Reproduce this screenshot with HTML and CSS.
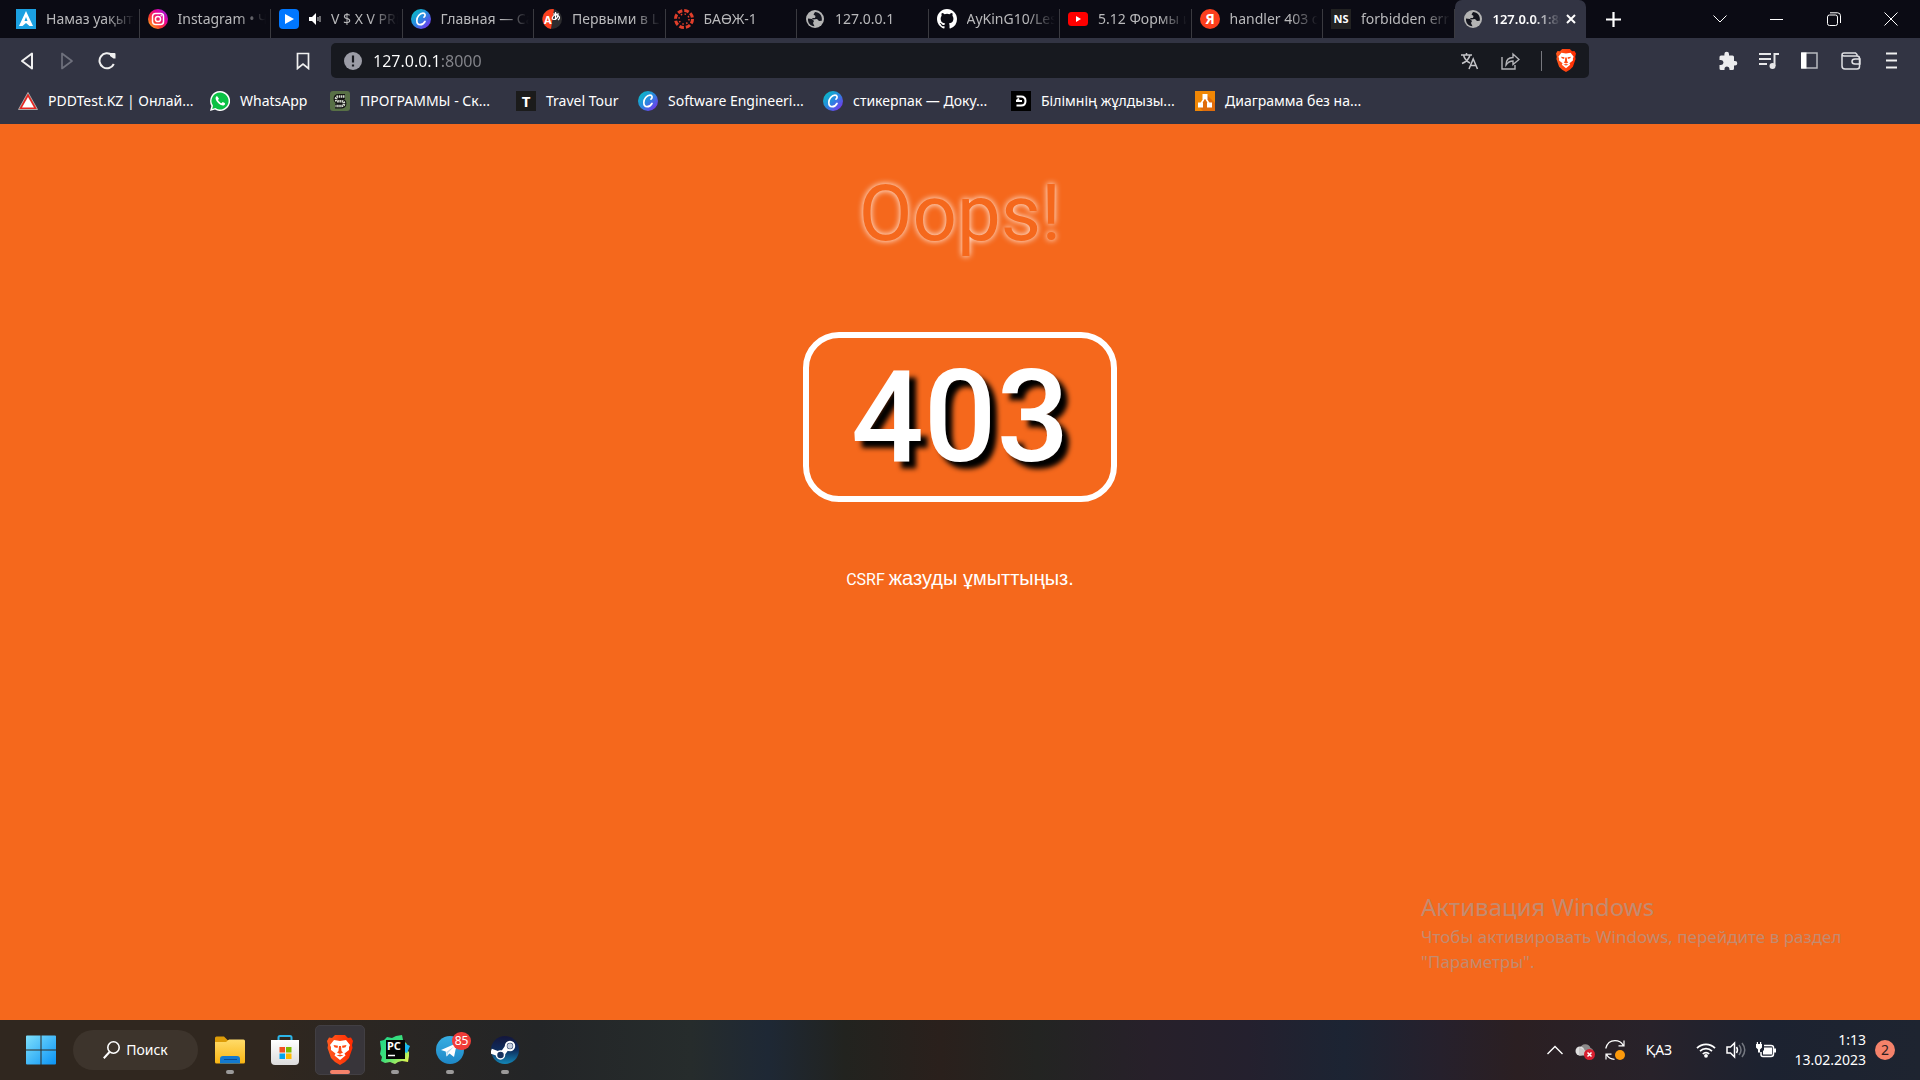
FILE: index.html
```html
<!DOCTYPE html>
<html lang="kk">
<head>
<meta charset="utf-8">
<meta name="viewport" content="width=device-width, initial-scale=1">
<title>127.0.0.1:8000</title>
<link rel="stylesheet" href="styles.css">
</head>
<body>
<svg class="defs" aria-hidden="true">
  <defs>
    <linearGradient id="g-insta" x1="0" y1="1" x2="1" y2="0"><stop offset="0" stop-color="#ffd521"/><stop offset=".35" stop-color="#fb3a30"/><stop offset=".65" stop-color="#e6009a"/><stop offset="1" stop-color="#7a2df5"/></linearGradient>
    <linearGradient id="g-canva" x1="0" y1="0" x2="1" y2="1"><stop offset="0" stop-color="#00c8c0"/><stop offset=".5" stop-color="#2a86e0"/><stop offset="1" stop-color="#8a1ff0"/></linearGradient>
    <linearGradient id="g-win" x1="0" y1="0" x2="1" y2="1"><stop offset="0" stop-color="#7fe0fb"/><stop offset="1" stop-color="#0a93f5"/></linearGradient>
    <linearGradient id="g-folder" x1="0" y1="0" x2="0" y2="1"><stop offset="0" stop-color="#ffdb69"/><stop offset="1" stop-color="#f9b513"/></linearGradient>
    <linearGradient id="g-store" x1="0" y1="0" x2="0" y2="1"><stop offset="0" stop-color="#ffffff"/><stop offset="1" stop-color="#dcdcdc"/></linearGradient>
    <linearGradient id="g-brave" x1="0" y1="0" x2="1" y2="0"><stop offset="0" stop-color="#ff5a1f"/><stop offset="1" stop-color="#ff2a00"/></linearGradient>
    <linearGradient id="g-pc" x1="0" y1="0" x2="1" y2="1"><stop offset="0" stop-color="#21d789"/><stop offset=".5" stop-color="#3fe07a"/><stop offset="1" stop-color="#fcf84a"/></linearGradient>
    <linearGradient id="g-tg" x1="0" y1="0" x2="0" y2="1"><stop offset="0" stop-color="#37aee2"/><stop offset="1" stop-color="#1e88c7"/></linearGradient>
    <linearGradient id="g-steam" x1="0" y1="0" x2="0" y2="1"><stop offset="0" stop-color="#14163c"/><stop offset=".5" stop-color="#0e2c5c"/><stop offset="1" stop-color="#1387b8"/></linearGradient>
    <symbol id="canva" viewBox="0 0 20 20"><circle cx="10" cy="10" r="10" fill="url(#g-canva)"/><path d="M13 8.200c1.800-1.500 1.400-4-1-4C8.800 4.200 5.800 8 5.800 11.500c0 2.500 1.300 4.200 3.400 4.200 2 0 3.700-1.300 4.800-3.200" fill="none" stroke="#fff" stroke-width="1.700" stroke-linecap="round"/></symbol>
    <symbol id="globe" viewBox="0 0 20 20"><circle cx="10" cy="10" r="9" fill="currentColor"/><path d="M3 9.500l4 .5 2 2-1 2 1.500 3.200C5 17 2.600 13.500 3 9.500zM10 3l-1.500 2.500 2 1.500-.5 2H7l1 1.500 4-.5 2 2 2.800-.3C17.500 6.500 14.500 3 10 3z" fill="#15161f"/></symbol>
    <symbol id="brave" viewBox="0 0 26 30"><path d="M8 0h10l3 3 3-.5L26 6l-1 4 .5 3L22 23l-4 4-5 3-5-3-4-4L.5 13 1 10 0 6l2-3.500L5 3z" fill="url(#g-brave)"/><path d="M7 5l6 1 6-1 4 5-1 2 0 3-4.500 3.500 1 2L13 25l-5.500-4.500 1-2L4 15v-3l-1-2z" fill="#fff"/><path d="M6.500 10l4.500.8-.5 2.200-3-.8zM19.500 10l-4.500.8.5 2.200 3-.8zM12 11h2l.5 5 1.500 1.500-3 1.500-3-1.500 1.500-1.500zM9.500 20.500l3.500-1 3.500 1-3.500 1z" fill="#ff4a14"/></symbol>
  </defs>
</svg>

<header class="browser">
  <div class="strip">
    <nav class="tabs" aria-label="Tabs">
      <div class="tab"><a href="#"><svg class="fav" viewBox="0 0 20 20"><path fill="#1ba0e1" d="M0 0h20v20H0z"/><path d="M10 2l7 15h-3.500L10 14l-3.500 3H3zM10 8l-1.500 4h3z" fill="#fff" fill-rule="evenodd"/></svg><span class="title">Намаз уақыты</span></a></div>
      <div class="tab"><a href="#"><svg class="fav" viewBox="0 0 20 20"><circle cx="10" cy="10" r="10" fill="url(#g-insta)"/><rect x="4.500" y="4.500" width="11" height="11" rx="3" fill="none" stroke="#fff" stroke-width="1.500"/><circle cx="10" cy="10" r="2.600" fill="none" stroke="#fff" stroke-width="1.500"/><circle cx="13.200" cy="6.800" r=".8" fill="#fff"/></svg><span class="title">Instagram • Чат</span></a></div>
      <div class="tab"><a href="#"><svg class="fav" viewBox="0 0 20 20"><rect width="20" height="20" rx="4" fill="#07f"/><path d="M6 5l9 5-9 5z" fill="#fff"/></svg><svg class="sound" viewBox="0 0 12 12"><path d="M0 4h3l4-4v12L3 8H0z" fill="#fff"/><path d="M9 4v4M11 3v6" stroke="#ccc"/></svg><span class="title">V $ X V PRiN</span></a></div>
      <div class="tab"><a href="#"><svg class="fav"><use href="#canva"/></svg><span class="title">Главная — Canva</span></a></div>
      <div class="tab"><a href="#"><svg class="fav" viewBox="0 0 20 20"><circle cx="10" cy="10" r="10" fill="#2c2c2e"/><path d="M12 .2A10 10 0 1 0 9 20z" fill="#fc3f1d"/><text x="2" y="15" class="glyph" font-size="11">A</text><path d="M11 5h6M13.500 3v7.500M16 6.500q-1 4-4 4t-1-3 5-1 0 4.500" fill="none" stroke="#fff" stroke-width="1.200"/></svg><span class="title">Первыми в Lin</span></a></div>
      <div class="tab"><a href="#"><svg class="fav" viewBox="0 0 20 20"><circle cx="10" cy="10" r="8.500" fill="none" stroke="#e13f2b" stroke-width="3" stroke-dasharray="4.700 1.976"/><circle cx="10" cy="10" r="5" fill="none" stroke="#e13f2b" stroke-width="1.500" stroke-dasharray="1.500 2.427"/></svg><span class="title">БАӨЖ-1</span></a></div>
      <div class="tab"><a href="#"><svg class="fav globe"><use href="#globe"/></svg><span class="title">127.0.0.1</span></a></div>
      <div class="tab"><a href="#"><svg class="fav" viewBox="0 0 16 16"><path fill="#fff" d="M8 0C3.580 0 0 3.580 0 8c0 3.540 2.290 6.530 5.470 7.590.4.070.55-.17.55-.38v-1.490c-2.010.37-2.530-.49-2.690-.94-.09-.23-.48-.94-.82-1.130-.28-.15-.68-.52-.01-.53.63-.01 1.080.58 1.230.82.72 1.210 1.870.87 2.330.66.070-.52.28-.87.51-1.070-1.780-.2-3.640-.89-3.640-3.950 0-.87.31-1.590.82-2.150-.08-.2-.36-1.020.08-2.120 0 0 .67-.21 2.200.82a7.400 7.400 0 0 1 4 0c1.530-1.040 2.200-.82 2.200-.82.44 1.100.16 1.920.08 2.120.51.56.82 1.270.82 2.150 0 3.070-1.870 3.750-3.650 3.950.29.25.54.73.54 1.480v2.200c0 .21.15.46.55.38A8.010 8.010 0 0 0 16 8c0-4.420-3.580-8-8-8z"/></svg><span class="title">AyKinG10/Lesson</span></a></div>
      <div class="tab"><a href="#"><svg class="fav" viewBox="0 0 20 20"><rect y="3" width="20" height="14" rx="3.500" fill="red"/><path d="M8 7l5 3-5 3z" fill="#fff"/></svg><span class="title">5.12 Формы и</span></a></div>
      <div class="tab"><a href="#"><svg class="fav" viewBox="0 0 20 20"><circle cx="10" cy="10" r="10" fill="#fc3f1d"/><text x="10" y="15" class="glyph" text-anchor="middle" font-size="14">Я</text></svg><span class="title">handler 403 dja</span></a></div>
      <div class="tab"><a href="#"><svg class="fav" viewBox="0 0 20 20"><path fill="#222" d="M0 0h20v20H0z"/><text x="10" y="14" class="glyph" text-anchor="middle" font-size="11">NS</text></svg><span class="title">forbidden error</span></a></div>
      <div class="tab active"><a href="#"><svg class="fav globe"><use href="#globe"/></svg><span class="title">127.0.0.1:8000</span></a><button class="close" aria-label="Close tab"><svg width="10" height="10" viewBox="0 0 10 10"><path d="M1 1l8 8M9 1L1 9" stroke="#fff" stroke-width="2"/></svg></button></div>
    </nav>
    <button class="newtab" aria-label="New tab"><svg width="15" height="15" viewBox="0 0 15 15"><path d="M7.500 0v15M0 7.500h15" stroke="#fff" stroke-width="2.200"/></svg></button>
    <div class="controls">
      <button aria-label="Search tabs"><svg width="14" height="8" viewBox="0 0 14 8"><path d="M.5 .5L7 7l6.500-6.500"/></svg></button>
      <button aria-label="Minimize"><svg width="13" height="13" viewBox="0 0 13 13"><path d="M0 6.500h13"/></svg></button>
      <button aria-label="Restore"><svg width="14" height="14" viewBox="0 0 14 14"><rect x=".5" y="3" width="10" height="10.500" rx="2"/><path d="M3 .8h7.500q3 0 3 3V11"/></svg></button>
      <button aria-label="Close"><svg width="14" height="14" viewBox="0 0 14 14"><path d="M.5 .5l13 13M13.500 .5l-13 13"/></svg></button>
    </div>
  </div>

  <div class="toolbar">
    <button aria-label="Back"><svg width="14" height="18" viewBox="0 0 14 18"><path d="M12 1.500v15L2 9z" stroke="#f0f0f0" stroke-width="2" stroke-linejoin="round"/></svg></button>
    <button aria-label="Forward"><svg width="14" height="18" viewBox="0 0 14 18"><path d="M2 1.500v15L12 9z" stroke="#6f717d" stroke-width="1.700" stroke-linejoin="round"/></svg></button>
    <button aria-label="Reload"><svg width="18" height="18" viewBox="0 0 18 18"><path d="M14 3.200A7.500 7.500 0 1 0 15.800 12" stroke="#f0f0f0" stroke-width="2"/><path d="M12 1h4.500q1 0 1 1v4.500h-2L12 4z" fill="#f0f0f0"/></svg></button>
    <button class="mark" aria-label="Bookmark"><svg width="14" height="18" viewBox="0 0 14 18"><path d="M1.500 1.500h11v15L7 12l-5.500 4.500z" stroke="#f0f0f0" stroke-width="1.700"/></svg></button>
    <div class="address">
      <svg width="18" height="18" viewBox="0 0 18 18"><circle cx="9" cy="9" r="9" fill="#9b9ca6"/><path d="M9 3.500v7M9 12.500v2" stroke="#17191f" stroke-width="2.200"/></svg>
      <input class="url" type="text" value="127.0.0.1:8000" aria-label="Address" spellcheck="false">
      <button aria-label="Translate"><svg width="18" height="18" viewBox="0 0 18 18"><path d="M0 3h11M5.500 1v2M9 3C8 7 5 10 1 11.500M2.500 3C3.500 7 6 9.500 9 11M8 17l4.200-10 4.300 10M9.500 13.500h6" stroke="#c4c4c8" stroke-width="1.500"/></svg></button>
      <button aria-label="Share"><svg width="19" height="18" viewBox="0 0 19 18"><path d="M1 5v12h13v-4M5 13c0-5 3-7.500 7-7.500V2l6 5.500-6 5v-3.500c-3 0-5 1-7 4z" stroke="#b4b4b8" stroke-width="1.400"/></svg></button>
      <span class="rule"></span>
      <button class="shield" aria-label="Brave Shields"><svg width="20" height="23"><use href="#brave"/></svg></button>
    </div>
    <button aria-label="Extensions"><svg width="20" height="20" viewBox="0 0 20 20"><path d="M17 10h-1V6q0-1.500-1.500-1.500H11V3a2.300 2.300 0 0 0-4.600 0v1.500H3Q1.500 4.500 1.500 6v3H3a2.500 2.500 0 0 1 0 5H1.500v3.500Q1.500 19 3 19h3.500v-1a2.500 2.500 0 0 1 5 0v1h3q1.500 0 1.500-1.500V14.600h1a2.300 2.300 0 0 0 0-4.600z" fill="#ececee"/></svg></button>
    <button aria-label="Media"><svg width="20" height="18" viewBox="0 0 20 18"><path d="M0 2h12M0 7h12M0 12h8M15.500 14V2H20" stroke="#e6e6e8" stroke-width="2"/><circle cx="13.500" cy="14" r="3" fill="#e6e6e8"/></svg></button>
    <button aria-label="Side panel"><svg width="17" height="17" viewBox="0 0 17 17"><rect x="1" y="1" width="15" height="15" stroke="#b9bac0" stroke-width="1.500"/><path d="M0 .5h5.500v16H0z" fill="#fff"/></svg></button>
    <button aria-label="Wallet"><svg width="20" height="18" viewBox="0 0 20 18"><path d="M16 4V2.500L14.500 1H3Q1 1 1 3v11q0 3 3 3h12q2.500 0 2.500-2.500V6.500Q18.500 4 16 4H3Q1 4 1 2.500M19 7h-5q-3 0-3 2.500t3 2.500h5z" stroke="#e0e0e4" stroke-width="1.500"/></svg></button>
    <button aria-label="Menu"><svg width="11" height="17" viewBox="0 0 11 17"><path d="M0 1.500h11M0 8.500h11M0 15.500h11" stroke="#f0f0f0" stroke-width="1.800"/></svg></button>
  </div>

  <nav class="bookmarks" aria-label="Bookmarks">
    <a href="#"><svg class="fav" viewBox="0 0 20 20"><path d="M10 1.500L19.500 18.500H.5z" fill="#e52620" stroke="#aaa"/><path d="M10 6l6 10.500H4z" fill="#fff"/></svg>PDDTest.KZ | Онлай...</a>
    <a href="#"><svg class="fav" viewBox="0 0 20 20"><path d="M10 0a10 10 0 1 1-5 18.600L0 20l1.400-5A10 10 0 0 1 10 0z" fill="#fff"/><path d="M10 1.500a8.500 8.500 0 1 1-4.600 15.600L2.200 18l.8-3.200A8.500 8.500 0 0 1 10 1.500z" fill="#0bc144"/><path d="M7 5c-2 1-1.800 3.500.5 6.200S12.700 15 14 14.300s1.200-2 .7-2.300l-2-1-1.200 1.200C10 11.700 8.600 10.200 8 9l1-1.200z" fill="#fff"/></svg>WhatsApp</a>
    <a href="#"><svg class="fav" viewBox="0 0 20 20"><rect width="20" height="20" rx="3" fill="#587046"/><path d="M15 5.500H8.500Q6 5.500 6 8t2.500 2.200h3Q14 10.200 14 12.500T11.500 15H5" fill="none" stroke="#111" stroke-width="4.800"/><path d="M14.500 5.500h-6Q6 5.500 6 8t2.500 2.200h3Q14 10.200 14 12.500T11.500 15h-6" fill="none" stroke="#d8ddd2" stroke-width="2.600" stroke-dasharray="1.500 .6"/></svg>ПРОГРАММЫ - Ск...</a>
    <a href="#"><svg class="fav" viewBox="0 0 20 20"><path fill="#1b1b1b" d="M0 0h20v20H0z"/><text x="10" y="15.500" class="glyph" text-anchor="middle" font-size="15">T</text></svg>Travel Tour</a>
    <a href="#"><svg class="fav"><use href="#canva"/></svg>Software Engineeri...</a>
    <a href="#"><svg class="fav"><use href="#canva"/></svg>стикерпак — Доку...</a>
    <a href="#"><svg class="fav" viewBox="0 0 20 20"><path d="M0 0h20v20H0z"/><path d="M5.500 5.500H10q4.500 0 4.500 4.500T10 14.500H5.500M5 10h6M8 7.500L5.500 10" fill="none" stroke="#fff" stroke-width="2"/></svg>Білімнің жұлдызы...</a>
    <a href="#"><svg class="fav" viewBox="0 0 20 20"><path fill="#f08705" d="M0 0h20v20H0z"/><path d="M12 4l8 8v8H8l-4-4z" fill="#df6c0c"/><path d="M10 6L5.500 13.500M10 6l4.500 7.500" stroke="#fff" stroke-width="1.600"/><path d="M7.500 3h5v5h-5zM3 11.500h5v5H3zM12 11.500h5v5h-5z" fill="#fff"/></svg>Диаграмма без на...</a>
  </nav>
</header>

<main class="page">
  <h1>Oops!</h1>
  <p class="code">403</p>
  <p class="note">CSRF <span>жазуды ұмыттыңыз.</span></p>
  <aside class="activation">
    <h2>Активация Windows</h2>
    <p>Чтобы активировать Windows, перейдите в раздел "Параметры".</p>
  </aside>
</main>

<footer class="taskbar">
  <button class="app start" aria-label="Start"><svg width="30" height="30" viewBox="0 0 30 30"><path d="M0 1.500Q0 .5 1 .5h13.500v14H0zM15.500 .5H29q1 0 1 1v13H15.500zM0 15.500h14.500v14H1q-1 0-1-1zM15.500 15.500H30v13q0 1-1 1H15.500z" fill="url(#g-win)"/></svg></button>
  <button class="search"><svg width="17" height="18" viewBox="0 0 17 18"><circle cx="10.500" cy="6.500" r="5.700" fill="none" stroke="#fff" stroke-width="1.600"/><path d="M6.500 11L.8 17.200" stroke="#fff" stroke-width="2"/></svg>Поиск</button>
  <button class="app running" aria-label="Explorer"><svg width="30" height="28" viewBox="0 0 30 28"><path d="M0 2q0-1.500 1.500-1.500H9l3.500 3.500H29V10H0z" fill="#dd9c08"/><path d="M0 6h11l3-2.500h14.500Q30 3.500 30 5v21q0 1.500-1.500 1.500h-27Q0 27.500 0 26z" fill="url(#g-folder)"/><path d="M5 27.500V23q0-3 3-3h14q3 0 3 3v4.500z" fill="#1379cf"/><path d="M9 23.500h13" stroke="#0a4d94"/></svg></button>
  <button class="app" aria-label="Store"><svg width="30" height="30" viewBox="0 0 30 30"><path d="M8.500 6V2.500q0-1.500 1.500-1.500h10q1.500 0 1.500 1.500V6" fill="none" stroke="#2cb5e8" stroke-width="2"/><path d="M1 5h28v21q0 4-4 4H5q-4 0-4-4z" fill="url(#g-store)"/><path d="M9.500 12H15v5.500H9.500z" fill="#f25022"/><path d="M16 12h5.500v5.500H16z" fill="#7fba00"/><path d="M9.500 18.500H15V24H9.500z" fill="#00a4ef"/><path d="M16 18.500h5.500V24H16z" fill="#ffb900"/></svg></button>
  <button class="app running current" aria-label="Brave"><svg width="26" height="30"><use href="#brave"/></svg></button>
  <button class="app running" aria-label="PyCharm"><svg width="30" height="30" viewBox="0 0 30 30"><path d="M0 6l4-1 3-3 5 1 4-2 6-1 1 5 4 4-1 5 3 3 0 4-1 6-6-1-4 1-3 2-5-2-5 1-4-2 1-4-2-3 1-5z" fill="url(#g-pc)"/><path d="M24 8l6 3-3 7-3-1z" fill="#19b7f0"/><path d="M6 5h19v19H6z" fill="#050505"/><text x="7" y="15" class="glyph" font-size="11">PC</text><path d="M8 20.500h7" stroke="#fff" stroke-width="1.500"/></svg></button>
  <button class="app running" aria-label="Telegram"><svg width="28" height="28" viewBox="0 0 28 28"><circle cx="14" cy="14" r="14" fill="url(#g-tg)"/><path d="M5 14l16-7-3 14-4.500-3.500-3 3-.8-5z" fill="#fff"/><path d="M10.200 16L18 10.500 12 17l-1 3.500z" fill="#b6d9ee"/></svg><span class="count">85</span></button>
  <button class="app running" aria-label="Steam"><svg width="28" height="28" viewBox="0 0 28 28"><circle cx="14" cy="14" r="14" fill="url(#g-steam)"/><path d="M0 15l8 3M11 18.500l5-7" stroke="#fff" stroke-width="5"/><circle cx="19" cy="10" r="4.200" fill="#17315c" stroke="#fff" stroke-width="2"/><circle cx="19" cy="10" r="2.700" fill="#c6cede"/><circle cx="9.500" cy="19" r="4" fill="#17315c" stroke="#fff" stroke-width="1.500"/></svg></button>

  <div class="tray">
    <button aria-label="Hidden icons"><svg width="16" height="10" viewBox="0 0 16 10"><path d="M.5 9L8 1.500 15.500 9" fill="none" stroke="#fff" stroke-width="1.400"/></svg></button>
    <button aria-label="OneDrive"><svg width="20" height="20" viewBox="0 0 20 20"><path d="M5 8.500A5.500 5.500 0 0 1 15.500 8 4 4 0 0 1 18 13H4z" fill="#8d8a8a"/><circle cx="5" cy="11" r="4.500" fill="#e0dfdf"/><path d="M4 7l9 5v3.500H4z" fill="#c9c7c7"/><circle cx="14.500" cy="14.500" r="5.500" fill="#d81f30"/><path d="M12.500 12.500l4 4M16.500 12.500l-4 4" stroke="#fff" stroke-width="1.500"/></svg></button>
    <button aria-label="Update"><svg width="20" height="20" viewBox="0 0 20 20"><path d="M.7 8.500C2 3.500 5.500 .7 10 .7c3.500 0 6.500 1.600 8.300 4.800M19 .5v5.300h-5.500M9.500 19.300c-3.500 0-6.500-1.800-8-5M1 19.500v-5.300h5.500" fill="none" stroke="#fff" stroke-width="1.200"/><circle cx="15" cy="15" r="5" fill="#fc9a0c"/></svg></button>
    <button class="lang">ҚАЗ</button>
    <button class="status" aria-label="Network, volume, battery">
      <svg width="20" height="16" viewBox="0 0 20 16"><path d="M1 6.200a12.500 12.500 0 0 1 18 0M4 9.200a8.500 8.500 0 0 1 12 0M6.800 12a4.500 4.500 0 0 1 6.400 0" fill="none" stroke="#fff" stroke-width="1.700"/><circle cx="10" cy="13.800" r="1.900" fill="#fff"/></svg>
      <svg width="20" height="18" viewBox="0 0 20 18"><path d="M1 6h3.500L8.500 2v14l-4-4H1zM10.500 6q2 3 0 6" fill="none" stroke="#fff" stroke-width="1.500"/><path d="M13 4q4 5 0 10M16 2q5.500 7 0 14" fill="none" stroke="#747880" stroke-width="1.500"/></svg>
      <svg width="20" height="18" viewBox="0 0 20 18"><path d="M8 4.500h7q2.500 0 2.500 2V13q0 2.500-2.500 2.500H7q-2 0-2-2V11" fill="none" stroke="#fff" stroke-width="1.500"/><path d="M8 6.500h8v7H7V10l1-1zM18 7.500h2v4h-2zM0 3h6v3.500L4 8.500v3H2v-3L0 6.500zM.8 1h1.200v2H.8zM4 1h1.200v2H4z" fill="#fff"/></svg>
    </button>
    <div class="clock"><time>1:13</time><time>13.02.2023</time></div>
    <span class="alerts">2</span>
  </div>
</footer>
</body>
</html>
```
FILE: styles.css
```css
* { box-sizing: border-box; }

body {
  margin: 0;
  min-height: 100vh;
  display: flex;
  flex-direction: column;
  background: #f5681c;
  color: #fff;
  font: 14px/20px "Noto Sans", "Open Sans", sans-serif;
}

h1, h2, p { margin: 0; }
a { color: inherit; text-decoration: none; }
svg { display: block; flex: none; }

button {
  padding: 0;
  border: 0;
  background: none;
  color: inherit;
  font: inherit;
  display: flex;
  align-items: center;
  justify-content: center;
}

.defs { position: absolute; width: 0; height: 0; }
.glyph { fill: #fff; font-family: "Noto Sans", sans-serif; font-weight: 700; }
.fav { width: 20px; height: 20px; }

/* Tab strip */
.strip {
  height: 38px;
  display: flex;
  padding-left: 8px;
  background: #0b0b14;
}
.tabs { flex: 0 1 1578px; min-width: 0; display: flex; }
.tab {
  flex: 1 1 0;
  min-width: 0;
  display: flex;
  align-items: center;
  padding: 0 5px 0 8px;
  color: #b9b9bb;
  background: linear-gradient(#3a3a40, #3a3a40) right bottom / 1px 29px no-repeat;
}
.tab a { flex: 1; min-width: 0; display: flex; align-items: center; gap: 10px; }
.title {
  flex: 1;
  overflow: hidden;
  white-space: nowrap;
  mask-image: linear-gradient(to right, #000 calc(100% - 28px), transparent);
}
.sound { width: 12px; height: 12px; }
.globe { color: #b4b4b4; }
.tab.active { border-radius: 7px 7px 0 0; background: #323443; color: #fff; font-weight: 600; }
.active .title { font-size: 13px; }
.close { width: 20px; height: 20px; }
.newtab { width: 40px; margin-left: 7px; }
.controls { display: flex; margin-left: auto; padding-right: 1px; }
.controls button { width: 57px; }
.controls svg { fill: none; stroke: #fff; stroke-width: 1; }

/* Toolbar */
.toolbar {
  height: 45px;
  display: flex;
  align-items: center;
  padding: 0 8px 0 7px;
  background: #323443;
}
.toolbar button { width: 41px; height: 36px; flex: none; }
.toolbar > button:nth-child(-n+4) { width: 40px; }
.toolbar svg { fill: none; }
.toolbar > .mark { margin-left: 156px; }
.address {
  flex: 1;
  min-width: 0;
  height: 35px;
  display: flex;
  align-items: center;
  margin: 0 118px 0 8px;
  padding: 0 3px 0 13px;
  border-radius: 5px;
  background: #17191f;
}
.url {
  flex: 1;
  min-width: 0;
  border: 0;
  padding: 0 0 0 11px;
  outline: 0;
  font: 16px/24px "Noto Sans", sans-serif;
  color: transparent;
  background: linear-gradient(to right, #fff 77px, #85868c 77px);
  background-clip: text;
}
.rule { width: 1px; height: 20px; margin-left: 10px; background: #77787e; }
.toolbar .shield { margin-left: 3px; }

/* Bookmarks bar */
.bookmarks {
  height: 41px;
  display: grid;
  grid-template-columns: 192px 120px 186px 122px 185px 188px 184px 184px;
  align-items: center;
  padding: 0 18px 5px;
  background: #323443;
}
.bookmarks a { display: flex; align-items: center; gap: 10px; white-space: nowrap; }

/* Error page */
.page {
  flex: 1;
  position: relative;
  display: flex;
  flex-direction: column;
  align-items: center;
  padding-top: 42px;
}
.page h1 {
  font: 400 78px/96px Roboto, sans-serif;
  color: #f5681c;
  text-shadow: 0 0 6px #fff;
}
.code {
  margin-top: 70px;
  padding: 0 42px;
  border: 6px solid #fff;
  border-radius: 36px;
  font: 500 128px/158px Roboto, sans-serif;
  text-shadow: 7px 7px 5px #000;
}
.note {
  margin-top: 64px;
  font: 16px/24px Roboto, sans-serif;
}
.note span { font-family: "Liberation Sans", sans-serif; font-size: 20px; }
.activation {
  position: absolute;
  right: 70px;
  bottom: 46px;
  width: 429px;
  color: #c38b70;
}
.activation h2 { font: 400 24px/34px "Noto Sans", sans-serif; }
.activation p { font-size: 17px; line-height: 25px; }

/* Taskbar */
.taskbar {
  height: 60px;
  display: flex;
  align-items: center;
  gap: 5px;
  padding: 0 25px 0 16px;
  background: linear-gradient(to right, #30271f 0, #30271f 14%, #232527 28%, #262c2c 36%, #1e2835 40%, #22231f 44%, #2a201c 49%, #232422 54%, #27202a 60%, #24202e 65%, #1c2433 70%, #26202c 75%, #2b1f22 79%, #28222a 86%, #1c2230 92%, #1e2430);
}
.app { position: relative; width: 50px; height: 50px; border-radius: 5px; }
.start { margin-right: 2px; }
.search {
  width: 125px;
  height: 40px;
  gap: 6px;
  margin-right: 2px;
  border-radius: 20px;
  background: #3d342c;
}
.running::after {
  content: "";
  position: absolute;
  left: 21px;
  bottom: 1px;
  width: 8px;
  height: 4px;
  border-radius: 2px;
  background: #9b9a9a;
}
.current { background: #38353a; border: 1px solid #423f43; }
.current::after { left: 14px; bottom: 0; width: 20px; background: #f5826a; }
.count {
  position: absolute;
  right: 4px;
  top: 7px;
  width: 19px;
  height: 18px;
  border-radius: 9px;
  background: #f03c38;
  font-size: 12px;
  line-height: 18px;
}
.tray { display: flex; align-items: center; margin-left: auto; }
.tray button { height: 40px; width: 30px; }
.tray .lang { width: 58px; }
.tray .status { width: 80px; gap: 10px; margin-left: 8px; }
.clock {
  display: flex;
  flex-direction: column;
  width: 90px;
  text-align: right;
}
.alerts {
  width: 20px;
  height: 20px;
  margin-left: 9px;
  border-radius: 10px;
  background: #f5826a;
  color: #2b1f22;
  text-align: center;
}
```
